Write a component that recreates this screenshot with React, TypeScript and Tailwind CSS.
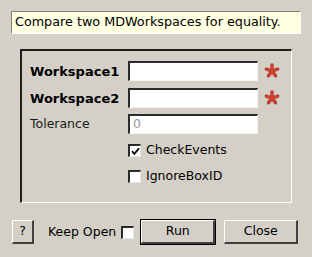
import React from 'react';

const sunken =
  'border-t border-l border-t-[#808080] border-l-[#808080] border-r border-b border-r-white border-b-white';

function Star() {
  // five-armed red asterisk used to flag mandatory properties
  const arms = [0, 72, 144, 216, 288];
  return (
    <svg width="16" height="16" viewBox="-8 -8 16 16" className="ml-[6px] shrink-0">
      {arms.map((a) => (
        <line
          key={a}
          x1="0"
          y1="0"
          x2="0"
          y2="-6"
          stroke="#b73626"
          strokeWidth="3.4"
          strokeLinecap="round"
          transform={`rotate(${a})`}
        />
      ))}
      {arms.map((a) => (
        <line
          key={'i' + a}
          x1="0"
          y1="0"
          x2="0"
          y2="-5.6"
          stroke="#d0432f"
          strokeWidth="2"
          strokeLinecap="round"
          transform={`rotate(${a})`}
        />
      ))}
    </svg>
  );
}

function TextInput({ value, placeholder }: { value?: string; placeholder?: string }) {
  return (
    <div className="w-[130px] h-[20px] bg-white border-t-2 border-l-2 border-t-[#2b2b2b] border-l-[#2b2b2b] border-r border-b border-r-[#f2f2f2] border-b-[#f2f2f2] flex items-center pl-[3px] text-[#9a9a9a]">
      {value ?? placeholder ?? ''}
    </div>
  );
}

function CheckBox({ checked }: { checked?: boolean }) {
  return (
    <div className="w-[13px] h-[13px] bg-white border-t-2 border-l-2 border-t-[#2b2b2b] border-l-[#2b2b2b] border-r border-b border-r-[#e8e8e8] border-b-[#e8e8e8] flex items-center justify-center shrink-0">
      {checked && (
        <svg width="9" height="9" viewBox="0 0 9 9">
          <path d="M1 4.2 L3.4 6.8 L8 1.2" fill="none" stroke="#000" strokeWidth="1.8" />
        </svg>
      )}
    </div>
  );
}

function Button({ label, wide, def }: { label: string; wide?: string; def?: boolean }) {
  const inner = (
    <div
      className={`h-[24px] ${wide ?? 'w-[74px]'} bg-[#d4d0c8] border-t border-l border-t-white border-l-white border-r-2 border-b-2 border-r-[#404040] border-b-[#404040] flex items-center justify-center`}
    >
      {label}
    </div>
  );
  if (def) return <div className="border border-black">{inner}</div>;
  return inner;
}

export default function App() {
  return (
    <div className="w-[312px] h-[257px] bg-[#d4d0c8] pt-[11px] pl-[11px] text-[12.5px] text-black font-['DejaVu_Sans',sans-serif] leading-none">
      <div className={`w-[290px] h-[23px] bg-[#ffffe1] ${sunken} flex items-center pl-[3px] text-[12.75px]`}>
        Compare two MDWorkspaces for equality.
      </div>

      <div className="ml-[9px] mt-[15px] w-[272px] h-[154px] border-t-2 border-l-2 border-t-[#1e1e1e] border-l-[#1e1e1e] border-r border-b border-r-white border-b-white pl-[8px] pt-[10px]">
        <div className="flex items-center h-[20px]">
          <span className="w-[98px] font-bold text-[13px]">Workspace1</span>
          <TextInput />
          <Star />
        </div>
        <div className="flex items-center h-[20px] mt-[7px]">
          <span className="w-[98px] font-bold text-[13px]">Workspace2</span>
          <TextInput />
          <Star />
        </div>
        <div className="flex items-center h-[20px] mt-[6px] text-[#1a1a1a]">
          <span className="w-[98px]">Tolerance</span>
          <TextInput placeholder="0" />
        </div>
        <div className="flex items-center gap-[5px] ml-[98px] mt-[10px] h-[13px]">
          <CheckBox checked />
          <span>CheckEvents</span>
        </div>
        <div className="flex items-center gap-[5px] ml-[98px] mt-[13px] h-[13px]">
          <CheckBox />
          <span>IgnoreBoxID</span>
        </div>
      </div>

      <div className="flex items-center h-[26px] mt-[16px] pl-[1px]">
        <Button label="?" wide="w-[22px]" />
        <span className="ml-[14px]">Keep Open</span>
        <div className="ml-[5px]">
          <CheckBox />
        </div>
        <div className="ml-[6px]">
          <Button label="Run" def />
        </div>
        <div className="ml-[8px]">
          <Button label="Close" />
        </div>
      </div>
    </div>
  );
}
